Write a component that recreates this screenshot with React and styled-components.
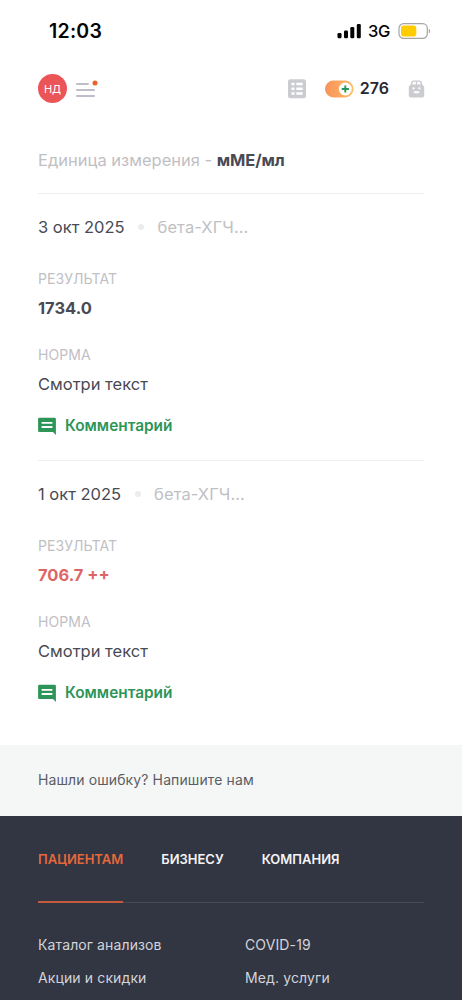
import React from "react";
import styled, { createGlobalStyle } from "styled-components";

const GlobalStyle = createGlobalStyle`
  *, *::before, *::after { box-sizing: border-box; }
  html, body { margin: 0; padding: 0; background: #fff; }
  body { overflow: hidden; font-family: Inter, "Noto Sans", sans-serif; -webkit-font-smoothing: antialiased; }
`;

const Screen = styled.div`
  width: 100%;
  height: 1000px;
  overflow: hidden;
  display: flex;
  flex-direction: column;
  background: #fff;
  color: #484a54;
`;

const StatusBar = styled.div`
  flex: none;
  height: 62px;
  padding: 0 31px 0 49px;
  display: flex;
  align-items: center;
  justify-content: space-between;
  color: #050505;
`;

const Clock = styled.span`
  font-size: 19.5px;
  font-weight: 600;
  letter-spacing: 0.25px;
`;

const StatusIcons = styled.div`
  display: flex;
  align-items: center;
`;

const Network = styled.span`
  margin: 0 8px 0 7px;
  font-size: 16.5px;
  font-weight: 500;
  letter-spacing: -0.3px;
`;

const Header = styled.header`
  flex: none;
  height: 53px;
  padding: 0 37px 0 38px;
  display: flex;
  align-items: center;
  justify-content: space-between;
`;

const HeaderGroup = styled.div`
  display: flex;
  align-items: center;
`;

const Avatar = styled.div`
  width: 29px;
  height: 29px;
  margin-right: 8px;
  border-radius: 50%;
  display: grid;
  place-items: center;
  background: #eb5558;
  color: #fff;
  font-size: 11px;
`;

const Bonus = styled.span`
  display: flex;
  margin-left: 19px;
`;

const Points = styled.span`
  margin: 0 19px 0 6px;
  color: #262733;
  font-size: 16px;
  line-height: 20px;
  padding-bottom: 1px;
  font-weight: 600;
`;

const Unit = styled.div`
  flex: none;
  height: 78px;
  padding: 33px 38px 0;
  font-size: 16.5px;
  line-height: 24px;
  color: #bfc0c4;
  white-space: nowrap;

  b { font-weight: 700; color: #484a54; letter-spacing: -0.15px; }
`;

const Results = styled.main`
  flex: none;
  height: 552px;
  padding: 0 38px;
`;

const Entry = styled.article`
  height: ${(p) => p.$height}px;
  padding-top: 21px;
  border-top: 1px solid #eeeef0;
`;

const EntryHead = styled.div`
  display: flex;
  align-items: center;
  font-size: 16.5px;
  line-height: 24px;
`;

const Dot = styled.span`
  width: 6px;
  height: 6px;
  margin: 0 13.5px;
  border-radius: 50%;
  background: #ececee;
`;

const TestName = styled.span`
  color: #bfc0c4;
  letter-spacing: 0.08px;
`;

const Label = styled.div`
  margin-top: ${(p) => p.$gap}px;
  font-size: 14px;
  line-height: 20px;
  letter-spacing: 0.05px;
  color: #bfc0c4;
  text-transform: uppercase;
`;

const Value = styled.div`
  margin-top: 7px;
  font-size: 16.5px;
  line-height: 24px;
  font-weight: ${(p) => (p.$strong ? 700 : 400)};
  color: ${(p) => (p.$alert ? "#de6567" : "#484a54")};
`;

const Comment = styled.a`
  margin-top: 18px;
  display: flex;
  align-items: center;
  gap: 9px;
  font-size: 15.4px;
  line-height: 24px;
  font-weight: 600;
  color: #2d9557;
`;

const Feedback = styled.div`
  flex: none;
  height: 71px;
  padding: 23px 38px 0;
  background: #f5f7f6;
  color: #5b5d65;
  font-size: 14px;
  letter-spacing: 0.11px;
  line-height: 24px;
`;

const Footer = styled.footer`
  flex: 1;
  padding: 0 38px;
  background: #323542;
`;

const Tabs = styled.nav`
  height: 87px;
  display: flex;
  gap: 38px;
  border-bottom: 1px solid #474a55;
`;

const Tab = styled.a`
  height: 87px;
  padding-top: 31px;
  border-bottom: 2px solid ${(p) => (p.$active ? "#c4593c" : "transparent")};
  color: ${(p) => (p.$active ? "#e5683c" : "#f4f4f6")};
  font-size: 13px;
  line-height: 24px;
  font-weight: 600;
`;

const Links = styled.div`
  padding-top: 30px;
  display: grid;
  grid-template-columns: 207px 1fr;
  row-gap: 9px;
`;

const FooterLink = styled.a`
  font-size: 14px;
  letter-spacing: 0.12px;
  line-height: 24px;
  color: #d3d4d9;
`;

const SignalIcon = () => (
  <svg width="24" height="16" viewBox="0 0 24 16" fill="#050505">
    <rect x="0.5" y="10" width="4" height="5.3" rx="1.2" />
    <rect x="7" y="7.5" width="4" height="7.8" rx="1.2" />
    <rect x="13.3" y="4" width="4" height="11.3" rx="1.2" />
    <rect x="19.8" y="1" width="4" height="14.3" rx="1.2" />
  </svg>
);

const BatteryIcon = () => (
  <svg width="33" height="16" viewBox="0 0 33 16">
    <rect x="1" y="0.7" width="28.3" height="14.6" rx="4.6" fill="#fff" stroke="#a5a5a7" strokeWidth="1.2" />
    <rect x="3" y="2.5" width="15.3" height="11" rx="2.8" fill="#fc0" />
    <path d="M30.8 5.7c1.8.6 1.8 4 0 4.6z" fill="#a5a5a7" />
  </svg>
);

const MenuIcon = () => (
  <svg width="23" height="20" viewBox="0 0 23 20">
    <path d="M2 5h11M2 11h17M2 17h17" stroke="#bdbec6" strokeWidth="2" strokeLinecap="round" />
    <circle cx="20" cy="4" r="2.5" fill="#ec622b" />
  </svg>
);

const ListIcon = () => (
  <svg width="18" height="20" viewBox="0 0 18 20">
    <rect y="0.3" width="18" height="19" rx="2.5" fill="#cbccd0" />
    <g fill="#fff">
      <rect x="3.5" y="3.8" width="3" height="2.5" rx="0.5" />
      <rect x="3.5" y="8.6" width="3" height="2.5" rx="0.5" />
      <rect x="3.5" y="13.3" width="3" height="2.5" rx="0.5" />
      <rect x="8.3" y="3.8" width="6.4" height="2.5" rx="0.5" />
      <rect x="8.3" y="8.6" width="6.4" height="2.5" rx="0.5" />
      <rect x="8.3" y="13.3" width="6.4" height="2.5" rx="0.5" />
    </g>
  </svg>
);

const BonusIcon = () => (
  <svg width="29" height="18" viewBox="0 0 29 18">
    <defs>
      <linearGradient id="bonus" x1="0" x2="1">
        <stop offset="0" stopColor="#f8935a" />
        <stop offset="1" stopColor="#fdbc66" />
      </linearGradient>
    </defs>
    <rect y="0.5" width="28.5" height="17" rx="8.5" fill="url(#bonus)" />
    <circle cx="20.3" cy="9" r="6.5" fill="#fff" />
    <path d="M20.3 5.4v7.2M16.7 9h7.2" stroke="#28955a" strokeWidth="1.9" />
  </svg>
);

const BagIcon = () => (
  <svg width="17" height="18" viewBox="0 0 17 18">
    <path d="M3.7 5V3.4Q3.7 1.1 6 1.1h5q2.3 0 2.3 2.3V5M8.5 1v4" fill="none" stroke="#cbccd0" strokeWidth="1.4" />
    <path d="M2.6 4.5h11.8l1.8 2.2v8.8q0 2-2 2H2.8q-2 0-2-2V6.7z" fill="#cbccd0" />
    <circle cx="5.6" cy="8.3" r="1.1" fill="#fff" />
    <circle cx="11.4" cy="8.3" r="1.1" fill="#fff" />
    <path d="M5.7 11.3h5.6v.6q0 1.3-1.3 1.3H7q-1.3 0-1.3-1.3z" fill="#fff" />
  </svg>
);

const CommentIcon = () => (
  <svg width="18" height="18" viewBox="0 0 18 18">
    <path d="M1.4 0.8h15.2q1.3 0 1.3 1.3v15.9l-2.9-2.9H1.4Q.1 15.1.1 13.8V2.1Q.1.8 1.4.8z" fill="#2d9557" />
    <path d="M3.6 5.9h10.8M3.6 10h10.8" stroke="#fff" strokeWidth="1.8" />
  </svg>
);

const entries = [
  { date: "3 окт 2025", value: "1734.0", alert: false, height: 267 },
  { date: "1 окт 2025", value: "706.7 ++", alert: true, height: 285 },
];

const links = ["Каталог анализов", "COVID-19", "Акции и скидки", "Мед. услуги"];

export default function App() {
  return (
    <Screen>
      <GlobalStyle />
      <StatusBar>
        <Clock>12:03</Clock>
        <StatusIcons>
          <SignalIcon />
          <Network>3G</Network>
          <BatteryIcon />
        </StatusIcons>
      </StatusBar>
      <Header>
        <HeaderGroup>
          <Avatar>НД</Avatar>
          <MenuIcon />
        </HeaderGroup>
        <HeaderGroup>
          <ListIcon />
          <Bonus>
            <BonusIcon />
          </Bonus>
          <Points>276</Points>
          <BagIcon />
        </HeaderGroup>
      </Header>
      <Unit>
        Единица измерения - <b>мМЕ/мл</b>
      </Unit>
      <Results>
        {entries.map((e) => (
          <Entry key={e.date} $height={e.height}>
            <EntryHead>
              <span>{e.date}</span>
              <Dot />
              <TestName>бета-ХГЧ...</TestName>
            </EntryHead>
            <Label $gap={30}>Результат</Label>
            <Value $strong $alert={e.alert}>{e.value}</Value>
            <Label $gap={25}>Норма</Label>
            <Value>Смотри текст</Value>
            <Comment>
              <CommentIcon />
              Комментарий
            </Comment>
          </Entry>
        ))}
      </Results>
      <Feedback>Нашли ошибку? Напишите нам</Feedback>
      <Footer>
        <Tabs>
          <Tab $active>ПАЦИЕНТАМ</Tab>
          <Tab>БИЗНЕСУ</Tab>
          <Tab>КОМПАНИЯ</Tab>
        </Tabs>
        <Links>
          {links.map((l) => (
            <FooterLink key={l}>{l}</FooterLink>
          ))}
        </Links>
      </Footer>
    </Screen>
  );
}
